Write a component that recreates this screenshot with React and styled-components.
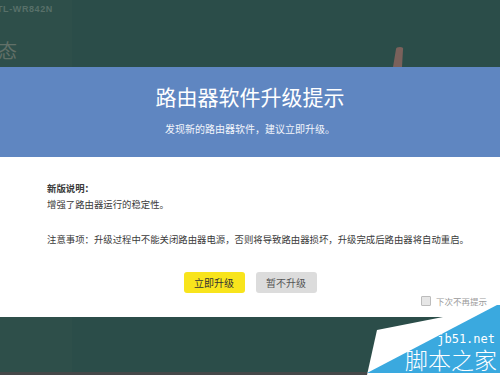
import styled, { createGlobalStyle } from "styled-components"

const Global = createGlobalStyle`
    html, body {
        margin : 0;
        padding : 0;
    }
    body {
        font-family : "Noto Sans CJK SC", "Liberation Sans", sans-serif;
    }
`;

const Page = styled.div`
    position : relative;
    width : 500px;
    height : 375px;
    overflow : hidden;
    background : #2b4d49;
    display : flex;
    flex-direction : column;
`;
const Main = styled.div`
    flex : 1;
    display : flex;
`;
const Side = styled.div`
    width : 72px;
    background : #2e4f4a;
    display : flex;
    flex-direction : column;
`;
const Model = styled.div`
    margin : 4px 0 0 -3px;
    font-family : "Liberation Sans", sans-serif;
    font-size : 9px;
    font-weight : 700;
    letter-spacing : 0.6px;
    color : #587069;
`;
const Status = styled.div`
    margin : 25px 0 0 -2px;
    font-size : 19px;
    line-height : 22px;
    color : #617068;
`;
const BottomStrip = styled.div`
    height : 3px;
    background : #454849;
`;
const Stroke = styled.svg`
    position : absolute;
    left : 390px;
    top : 45px;
`;

const Modal = styled.div`
    position : absolute;
    left : 0;
    top : 67px;
    width : 500px;
    display : flex;
    flex-direction : column;
`;
const Header = styled.div`
    height : 90px;
    background : #5f86c1;
    display : flex;
    flex-direction : column;
    align-items : center;
    padding-top : 17px;
    box-sizing : border-box;
`;
const Title = styled.div`
    font-size : 21px;
    line-height : 24px;
    color : #ffffff;
`;
const SubTitle = styled.div`
    margin-top : 14px;
    font-size : 10px;
    line-height : 14px;
    color : #f2f5fb;
`;
const Body = styled.div`
    height : 160px;
    background : #ffffff;
    padding : 23px 13px 0 47px;
    box-sizing : border-box;
    display : flex;
    flex-direction : column;
`;
const Line = styled.div`
    font-size : 9.4px;
    line-height : 16px;
    color : #3a3a3a;
    font-weight : ${p => p.$bold ? 700 : 400};
    margin-top : ${p => p.$gap || 0}px;
`;
const Buttons = styled.div`
    margin-top : 25px;
    display : flex;
    justify-content : center;
    gap : 11px;
    padding-right : 34px;
`;
const Button = styled.div`
    width : 61px;
    height : 21px;
    border-radius : 3px;
    background : ${p => p.$primary ? "#f8e41c" : "#dcdcdc"};
    color : ${p => p.$primary ? "#333" : "#555"};
    font-size : 10px;
    display : flex;
    justify-content : center;
    align-items : center;
`;
const Remember = styled.label`
    margin-top : 2px;
    align-self : flex-end;
    display : flex;
    align-items : center;
    gap : 5px;
    font-size : 8.5px;
    line-height : 12px;
    color : #9a9a9a;
`;
const Box = styled.span`
    width : 8px;
    height : 8px;
    border : 1px solid #bcbcbc;
    background : #e6e6e6;
    border-radius : 1px;
`;

const Watermark = styled.div`
    position : absolute;
    right : 0;
    bottom : 0;
    width : 145px;
    height : 72px;
`;
const MarkShape = styled.svg`
    position : absolute;
    left : 0;
    top : 0;
`;
const MarkSite = styled.div`
    position : absolute;
    right : 5px;
    top : 30px;
    font-family : "DejaVu Sans Mono", monospace;
    font-size : 12px;
    line-height : 12px;
    color : #ffffff;
`;
const MarkName = styled.div`
    position : absolute;
    right : 3px;
    top : 43px;
    font-size : 23px;
    line-height : 26px;
    font-weight : 300;
    color : #ffffff;
`;

export default function App(){
    return(
        <Page>
            <Global />
            <Main>
                <Side>
                    <Model>TL-WR842N</Model>
                    <Status>态</Status>
                </Side>
            </Main>
            <BottomStrip />
            <Stroke width="16" height="24" viewBox="0 0 16 24">
                <path d="M6 4 Q6 2 10 2 Q14 2 13 5 L12 22 L3 22 Z" fill="#7a615b" />
            </Stroke>

            {/* 업그레이드 팝업 */}
            <Modal>
                <Header>
                    <Title>路由器软件升级提示</Title>
                    <SubTitle>发现新的路由器软件，建议立即升级。</SubTitle>
                </Header>
                <Body>
                    <Line $bold>新版说明：</Line>
                    <Line>增强了路由器运行的稳定性。</Line>
                    <Line $gap={19}>注意事项：升级过程中不能关闭路由器电源，否则将导致路由器损坏，升级完成后路由器将自动重启。</Line>
                    <Buttons>
                        <Button $primary>立即升级</Button>
                        <Button>暂不升级</Button>
                    </Buttons>
                    <Remember>
                        <Box />
                        下次不再提示
                    </Remember>
                </Body>
            </Modal>

            <Watermark>
                <MarkShape width="145" height="72" viewBox="0 0 145 72">
                    <polygon points="22,27 88,14 145,14 145,72 12,72" fill="#ffffff" />
                    <polygon points="142,2 145,2 145,70 12,70" fill="#3aa9df" />
                </MarkShape>
                <MarkSite>jb51.net</MarkSite>
                <MarkName>脚本之家</MarkName>
            </Watermark>
        </Page>
    );
}
